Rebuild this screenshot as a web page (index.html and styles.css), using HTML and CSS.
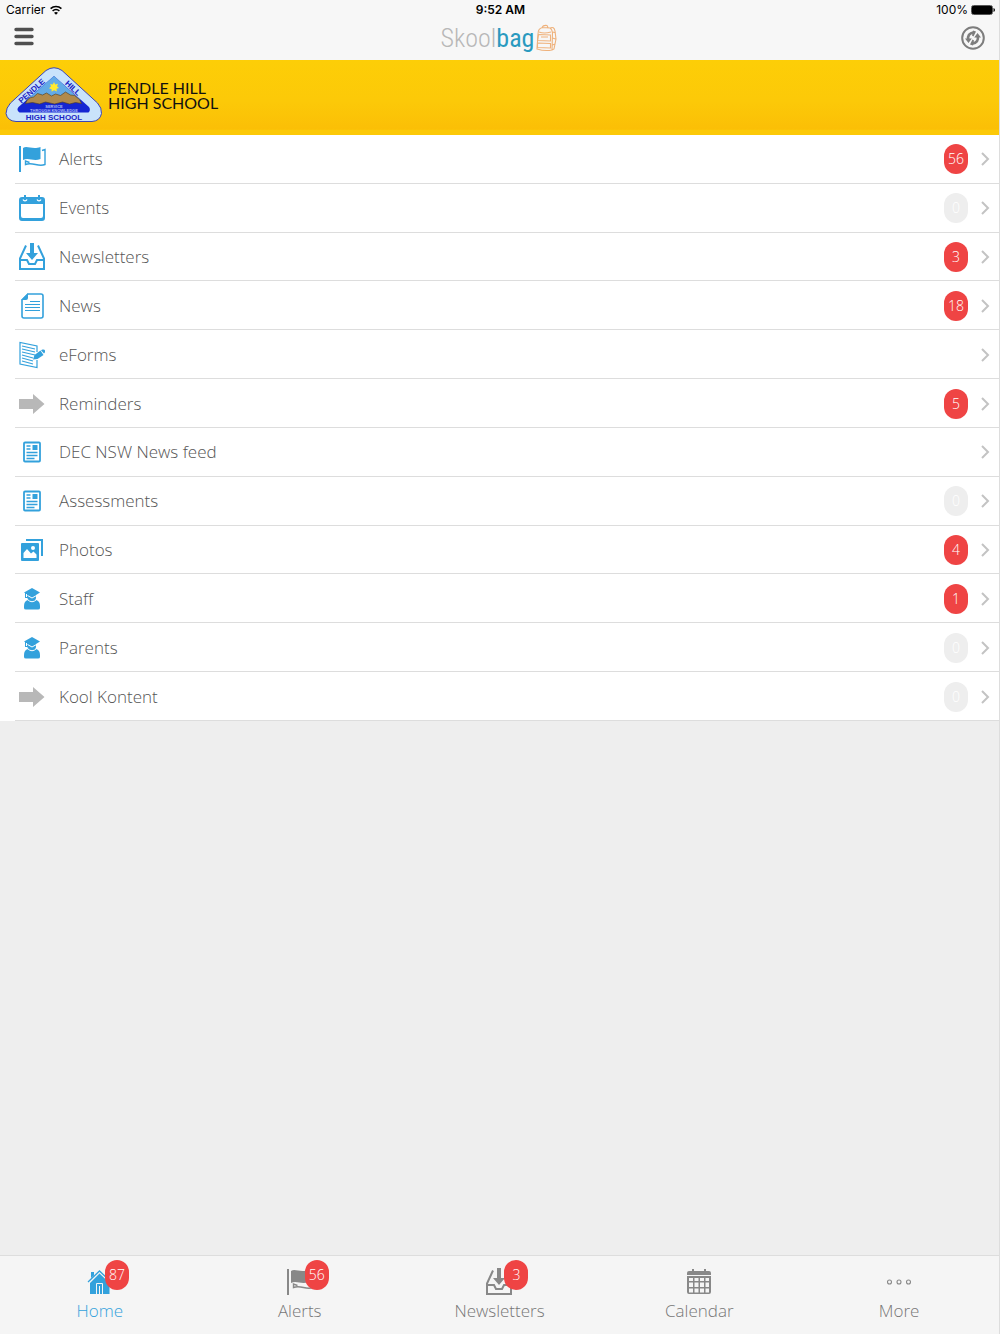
FILE: index.html
```html
<!DOCTYPE html>
<html lang="en">
<head>
<meta charset="utf-8">
<meta name="viewport" content="width=device-width, initial-scale=1">
<title>Skoolbag - Pendle Hill High School</title>
<link rel="stylesheet" href="styles.css">
</head>
<body>
<svg class="defs" aria-hidden="true">
  <symbol id="flag" viewBox="0 0 28 28">
    <path fill="currentColor" d="M1 1h2v26H1zM5 3c4-3 9 2 17.500-1V14c-7 3-12-2-17.500 1z"/>
    <path fill="none" stroke="currentColor" stroke-width="1.400" d="M24 5.500l3-1V19.500C20 22.500 15 16.500 7.500 19.500V16L11.500 17.500"/>
  </symbol>
  <symbol id="events" viewBox="0 0 28 28">
    <path fill="currentColor" fill-rule="evenodd" d="M4 3h20q3 0 3 3v18q0 3-3 3H4q-3 0-3-3V6q0-3 3-3zM3 10v12q0 2 2 2h18q2 0 2-2V10z"/>
    <path fill="none" stroke="#fff" stroke-width="1.200" d="M5 5.500a2.200 2.200 0 0 0 4 0M19 5.500a2.200 2.200 0 0 0 4 0"/>
    <path stroke="currentColor" stroke-width="2" d="M7 1v5M21 1v5"/>
  </symbol>
  <symbol id="inbox" viewBox="0 0 28 28">
    <path fill="currentColor" d="M12 0h4v10h4l-6 7-6-7h4z"/>
    <path fill="none" stroke="currentColor" stroke-width="2" d="M8 2.500L2 15.500V26h24V15.500L20 2.500M2 17h7l2 4h6l2-4h7"/>
  </symbol>
  <symbol id="news" viewBox="0 0 28 28">
    <path fill="none" stroke="currentColor" stroke-width="1.600" d="M10 2h13q2 0 2 2v20q0 2-2 2H6q-2 0-2-2V8z"/>
    <path fill="currentColor" d="M10 1v5q0 2-2 2H3z"/>
    <path stroke="currentColor" d="M12 9.500h10M7 12.500h15M7 15.500h15M7 18.500h15"/>
  </symbol>
  <symbol id="forms" viewBox="0 0 28 28">
    <path fill="none" stroke="currentColor" stroke-width="1.200" d="M19 11V5L2 1.500V23l17 3.500V19"/>
    <path stroke="currentColor" stroke-width="1.200" d="M4 5l13 3M4 8l13 3M4 11l13 3M4 14l11 3M4 17l11 3M4 20l11 3"/>
    <path fill="currentColor" d="M15 18.500L16.500 14l6-4.500 3 4.500-6 4zM23 9.300l1.500-.8q2-.5 2.500 1 .500 2-1 3z"/>
  </symbol>
  <symbol id="arrow" viewBox="0 0 28 28">
    <path fill="#b8b8b8" d="M1 9h14V4l11.500 10L15 24v-5H1z"/>
  </symbol>
  <symbol id="feed" viewBox="0 0 28 28">
    <rect x="6" y="4.500" width="16" height="19" rx="1" fill="none" stroke="currentColor" stroke-width="1.800"/>
    <path fill="currentColor" d="M14.500 7h5v5h-5z"/>
    <path stroke="currentColor" stroke-width="1.300" d="M8.500 8h4M8.500 11h4M8.500 14.500h11M8.500 17.500h11M8.500 20.500h8"/>
  </symbol>
  <symbol id="photos" viewBox="0 0 28 28">
    <path fill="currentColor" d="M8 3h17v17h-2V5H8z"/>
    <rect x="3" y="7" width="18" height="18" rx="1" fill="currentColor"/>
    <path fill="#fff" d="M5.500 22v-5l3.500-4 4 4.500 2.500-2 3 3V22z"/>
    <circle cx="15" cy="12" r="2" fill="#fff"/>
  </symbol>
  <symbol id="grad" viewBox="0 0 28 28">
    <path fill="currentColor" d="M14 3l8 4.500-4 2.500v3q-1 5-4 5-4 0-4.500-5H7V8L6 7.500z"/>
    <path fill="currentColor" d="M6 21q0-5 4-6l4 2.500 4-2.500q4 1 4 6v2q0 1.500-2 1.500H8Q6 24.500 6 23z"/>
    <path fill="none" stroke="#fff" stroke-width="1" d="M8.500 9v3M9.500 10.500l4.500 2.500 4.500-2.500M9.500 14.500q4.500 4.500 9 0"/>
  </symbol>
  <symbol id="house" viewBox="0 0 28 28">
    <path fill="none" stroke="currentColor" stroke-width="1.300" d="M2 14L13.500 3 25 14"/>
    <path fill="currentColor" d="M5 4h3v3.500L5 10zM13.500 5.500L23.500 15v11H4V15z"/>
    <path fill="none" stroke="#f5f5f5" stroke-width="1" d="M10.500 26V15.500h6V26M13.500 26v-8"/>
  </symbol>
  <symbol id="calendar" viewBox="0 0 28 28">
    <path fill="currentColor" fill-rule="evenodd" d="M4 3h20q2 0 2 2v2H2V5q0-2 2-2zM2 8h24v16q0 2-2 2H4q-2 0-2-2zm2 2v3h4v-3zm5.500 0v3h4v-3zm5.500 0v3h4v-3zm5.500 0v3H24v-3zM4 14.500V19h4v-4.500zm5.500 0V19h4v-4.500zm5.500 0V19h4v-4.500zm5.500 0V19H24v-4.500zM4 20.500v4h4v-4zm5.500 0v4h4v-4zm5.500 0v4h4v-4zm5.500 0v4H24v-4z"/>
    <path stroke="currentColor" stroke-width="2" d="M8 1v3M20 1v3"/>
  </symbol>
  <symbol id="dots" viewBox="0 0 28 28">
    <g fill="none" stroke="currentColor" stroke-width="1.100"><circle cx="4.500" cy="14" r="2"/><circle cx="14" cy="14" r="2"/><circle cx="23.500" cy="14" r="2"/></g>
  </symbol>
  <symbol id="chevron" viewBox="0 0 10 14">
    <path fill="none" stroke="#c3c3c3" stroke-width="2" d="M2 1l6 6-6 6"/>
  </symbol>
</svg>

<header>
  <div class="status">
    <span class="carrier">Carrier
      <svg width="12" height="10" viewBox="0 0 12 10"><g fill="none" stroke="#000" stroke-width="1.600"><path d="M.6 3.700a7.800 7.800 0 0 1 10.800 0M2.600 6a5 5 0 0 1 6.800 0"/></g><path d="M6 9.700L4 7.700q2-1.500 4 0z"/></svg>
    </span>
    <span class="time">9:52 AM</span>
    <span class="battery">100%
      <svg width="24" height="10" viewBox="0 0 24 10"><rect x=".5" y=".5" width="21" height="9" rx="2" fill="none" stroke="#555"/><rect x="1" y="1" width="20" height="8" rx="1"/><path d="M22.500 3v4q1.500-.5 1.500-2t-1.500-2z"/></svg>
    </span>
  </div>
  <div class="navbar">
    <button class="tool" type="button" aria-label="Menu"><svg width="20" height="24" viewBox="0 0 20 24"><path stroke="#4f4f4f" stroke-width="3.400" stroke-linecap="round" d="M2 3.500h16M2 10.500h16M2 17.500h16"/></svg></button>
    <div class="brand"><span>Skool<b>bag</b></span>
      <svg width="24" height="28" viewBox="0 0 24 28"><g fill="none" stroke="#efb27c" stroke-width="1.100"><path d="M3 25L4 10Q4 4 9 3.500l7 .5q2 1 2.500 5L18 26q-7 1.500-15-1zM8 3.500Q9 1 13 1.500L14 3.500M16 4q4-2 5 3l1 8-2 10-2 1M19 8l2.500 1M18.500 14l3 1M18.500 21l2.500-1"/><path d="M4.500 10.500l12 .5v6l-13-.5zM3.500 19l13 .5V24l-13-.5zM5 8q5 2 12 0M7 13h7"/></g></svg>
    </div>
    <button class="tool" type="button" aria-label="Refresh"><svg width="24" height="24" viewBox="0 0 24 24"><circle cx="12" cy="12" r="10.800" fill="none" stroke="#7d7d7d" stroke-width="2"/><g fill="none" stroke="#7d7d7d" stroke-width="2.600"><path d="M7.200 14Q6 7.500 13 6.200M16.800 10Q18 16.500 11 17.800"/></g><path fill="#7d7d7d" d="M4 12.500h6.800L7.500 17zM20 11.500h-6.800L16.500 7zM12 4.500l3 1-2.500 5-1.500-1zM12 19.500l-3-1 2.500-5 1.500 1z"/></svg></button>
  </div>
</header>

<section class="school">
  <svg class="crest" width="98" height="58" viewBox="5 6 98 58" role="img" aria-label="Pendle Hill High School crest">
    <path fill="#c9e3fb" stroke="#3a45b8" stroke-width="1" d="M46 10.500Q54 5 62 10.500L97.500 43Q102 48 101.500 53.500 100 61 92 61.500H16Q7.500 61 6 53.500 6 48 10.500 43z"/>
    <path fill="#1526d2" d="M54 16L89 47q2 3-.5 5.500H19.500Q16 50 18.500 47z"/>
    <path fill="#63abe6" d="M54 16L80.500 40H27z"/>
    <path fill="#b08a4c" stroke="#4e3b20" stroke-width=".6" d="M25.500 43.500q2-6 8-6.500l4-3.500 5 1.500 4-2 5 3 4-2 5 1.500 5-3.500 5 3 4 .5 5 4 2 4-6-1-6 1.500-7-2-8 2-9-2-6 2-7-1.500z"/>
    <path fill="#ffea2e" d="M54 22l1.200 2.500 2.800-.7-1 2.500 2 1.700-2.500.8.300 2.700-2.800-1.200-2.400 1.500v-2.600l-2.600-1 2-1.800-.8-2.400 2.600.5z"/>
    <g class="crest-name" text-anchor="middle">
      <text x="54" y="59.500" font-size="8">HIGH SCHOOL</text>
      <text transform="translate(33.500 33) rotate(-42)" font-size="8">PENDLE</text>
      <text transform="translate(71 30) rotate(43)" font-size="8">HILL</text>
    </g>
    <g class="crest-motto" text-anchor="middle"><text x="54" y="47.500" font-size="4">SERVICE</text><text x="54" y="51.500" font-size="4">THROUGH KNOWLEDGE</text></g>
  </svg>
  <h1>PENDLE HILL<br>HIGH SCHOOL</h1>
</section>

<main>
  <ul class="menu">
    <li><a href="#alerts"><svg class="icon"><use href="#flag"/></svg><span class="label">Alerts</span><span class="badge">56</span><svg class="chevron"><use href="#chevron"/></svg></a></li>
    <li><a href="#events"><svg class="icon"><use href="#events"/></svg><span class="label">Events</span><span class="badge none">0</span><svg class="chevron"><use href="#chevron"/></svg></a></li>
    <li><a href="#newsletters"><svg class="icon"><use href="#inbox"/></svg><span class="label">Newsletters</span><span class="badge">3</span><svg class="chevron"><use href="#chevron"/></svg></a></li>
    <li><a href="#latest"><svg class="icon"><use href="#news"/></svg><span class="label">News</span><span class="badge">18</span><svg class="chevron"><use href="#chevron"/></svg></a></li>
    <li><a href="#eforms"><svg class="icon"><use href="#forms"/></svg><span class="label">eForms</span><svg class="chevron"><use href="#chevron"/></svg></a></li>
    <li><a href="#reminders"><svg class="icon"><use href="#arrow"/></svg><span class="label">Reminders</span><span class="badge">5</span><svg class="chevron"><use href="#chevron"/></svg></a></li>
    <li><a href="#dec"><svg class="icon"><use href="#feed"/></svg><span class="label">DEC NSW News feed</span><svg class="chevron"><use href="#chevron"/></svg></a></li>
    <li><a href="#assessments"><svg class="icon"><use href="#feed"/></svg><span class="label">Assessments</span><span class="badge none">0</span><svg class="chevron"><use href="#chevron"/></svg></a></li>
    <li><a href="#gallery"><svg class="icon"><use href="#photos"/></svg><span class="label">Photos</span><span class="badge">4</span><svg class="chevron"><use href="#chevron"/></svg></a></li>
    <li><a href="#staff"><svg class="icon"><use href="#grad"/></svg><span class="label">Staff</span><span class="badge">1</span><svg class="chevron"><use href="#chevron"/></svg></a></li>
    <li><a href="#parents"><svg class="icon"><use href="#grad"/></svg><span class="label">Parents</span><span class="badge none">0</span><svg class="chevron"><use href="#chevron"/></svg></a></li>
    <li><a href="#kool"><svg class="icon"><use href="#arrow"/></svg><span class="label">Kool Kontent</span><span class="badge none">0</span><svg class="chevron"><use href="#chevron"/></svg></a></li>
  </ul>
</main>

<nav class="tabs">
  <a class="active" href="#home"><svg class="icon"><use href="#house"/></svg>Home<span class="badge">87</span></a>
  <a href="#alerts"><svg class="icon"><use href="#flag"/></svg>Alerts<span class="badge">56</span></a>
  <a href="#newsletters"><svg class="icon"><use href="#inbox"/></svg>Newsletters<span class="badge">3</span></a>
  <a href="#month"><svg class="icon"><use href="#calendar"/></svg>Calendar</a>
  <a href="#more"><svg class="icon"><use href="#dots"/></svg>More</a>
</nav>
</body>
</html>
```
FILE: styles.css
```css
* { box-sizing: border-box; }

body {
  margin: 0;
  min-height: 100vh;
  display: flex;
  flex-direction: column;
  background: #eee;
  border-right: 1px solid #ddd;
  font-family: "Open Sans", "Noto Sans", sans-serif;
  font-size: 17px;
  font-weight: 300;
  color: #555;
}

a { color: inherit; text-decoration: none; }
.defs { position: absolute; width: 0; height: 0; }

header { background: #f7f7f7; }

.status {
  display: grid;
  grid-template-columns: 1fr auto 1fr;
  align-items: center;
  height: 20px;
  padding: 0 4px 0 6px;
  font: 400 12px/20px Inter, "Liberation Sans", sans-serif;
  color: #000;
}
.carrier, .battery { display: flex; align-items: center; gap: 5px; }
.battery { justify-content: flex-end; gap: 3px; }
.time { font-weight: 600; }

.navbar {
  display: grid;
  grid-template-columns: 1fr auto 1fr;
  align-items: center;
  height: 40px;
  padding: 0 14px 4px;
}
.tool { display: flex; padding: 0; border: 0; background: none; cursor: pointer; }
.tool:last-child { justify-self: end; }
.brand {
  display: flex;
  align-items: center;
  font: 300 26px/32px "Roboto Condensed", "Arial Narrow", Roboto, sans-serif;
  color: #b8b8b8;
}
.brand b { font-weight: 400; color: #2a9abf; }

.school {
  display: flex;
  align-items: center;
  gap: 5px;
  height: 75px;
  padding: 0 5px 6px;
  background: linear-gradient(#fdce07, #fcc908 55%, #fbbf06 92%, #fcc908 94%);
}
.school h1 {
  margin: 0;
  font: 400 16px/15px Lato, "Open Sans", sans-serif;
  color: #111;
}
.crest-name { font-family: "Liberation Sans", sans-serif; font-weight: 700; fill: #1c25c4; }
.crest-motto { font-family: "Liberation Sans", sans-serif; font-weight: 700; fill: #aebcf5; }

main { flex: 1; }

.menu {
  display: grid;
  grid-auto-rows: 1fr;
  min-height: 586px;
  margin: 0;
  padding: 0 0 0 15px;
  list-style: none;
  background: #fff;
}
.menu li { display: flex; border-bottom: 1px solid #ddd; }
.menu a {
  flex: 1;
  display: flex;
  align-items: center;
  padding: 1px 9px 0 3px;
}
.icon { width: 28px; height: 28px; color: #33a1dc; }
.label { flex: 1; padding-left: 13px; line-height: 24px; }
.badge {
  width: 24px;
  height: 30px;
  border-radius: 12px;
  background: #ef4444;
  color: #fff;
  font-size: 14px;
  line-height: 30px;
  text-align: center;
}
.none { background: #eee; }
.chevron { width: 10px; height: 14px; margin-left: 12px; }

.tabs {
  display: grid;
  grid-template-columns: repeat(5, 1fr);
  border-top: 1px solid #ddd;
  background: #f5f5f5;
  color: #777;
}
.tabs a {
  position: relative;
  display: flex;
  flex-direction: column;
  align-items: center;
  gap: 3px;
  padding: 12px 0 11px;
  line-height: 24px;
}
.tabs .icon { color: #888; }
.tabs .active, .tabs .active .icon { color: #33a1dc; }
.tabs .badge { position: absolute; top: 4px; left: calc(50% + 5px); }
```
